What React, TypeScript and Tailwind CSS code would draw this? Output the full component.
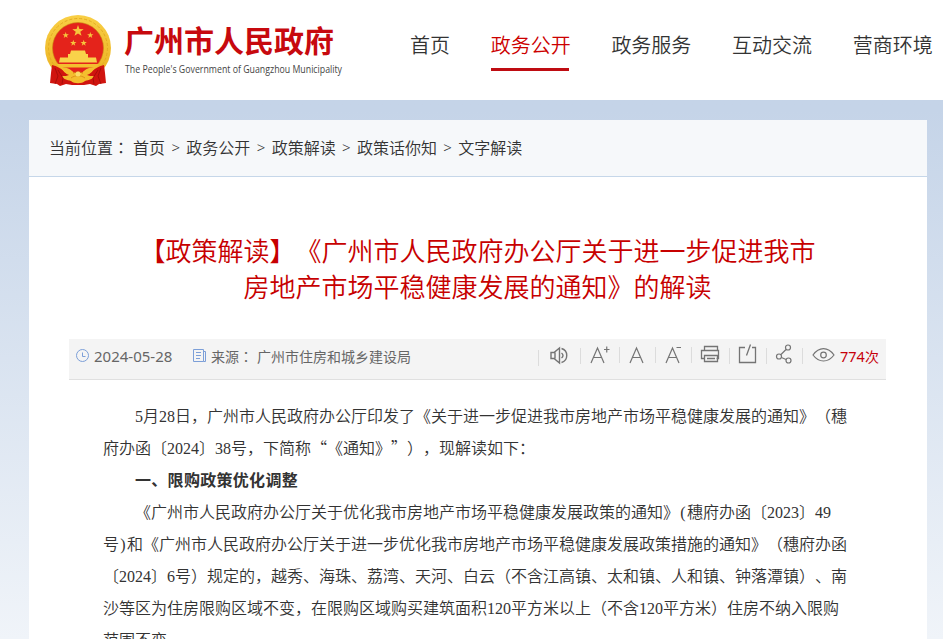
import { Fragment } from 'react'

const NAV_ITEMS = ['首页', '政务公开', '政务服务', '互动交流', '营商环境']
const CRUMBS = ['首页', '政务公开', '政策解读', '政策话你知', '文字解读']

function Star({ x, y, r }: { x: number; y: number; r: number }) {
  const points = Array.from({ length: 10 }, (_, i) => {
    const radius = i % 2 === 0 ? r : r * 0.4
    const a = (Math.PI / 5) * i - Math.PI / 2
    return `${(x + radius * Math.cos(a)).toFixed(2)},${(y + radius * Math.sin(a)).toFixed(2)}`
  }).join(' ')
  return <polygon points={points} fill="#f6c63c" />
}

function Emblem() {
  return (
    <svg width="68" height="72" viewBox="0 0 68 72" className="shrink-0">
      <defs>
        <linearGradient id="gold" x1="0" y1="0" x2="0" y2="1">
          <stop offset="0" stopColor="#f9cf45" />
          <stop offset="1" stopColor="#eab01f" />
        </linearGradient>
      </defs>
      <circle cx="34" cy="34" r="33" fill="url(#gold)" />
      <circle cx="34" cy="34" r="29.5" fill="none" stroke="#e3ab22" strokeWidth="1" strokeDasharray="3 2" />
      <circle cx="34" cy="34" r="25.5" fill="#e4231b" stroke="#c98a12" strokeWidth="0.6" />
      <Star x={34} y={17} r={6} />
      <Star x={21.7} y={21.3} r={3.3} />
      <Star x={46.3} y={21.3} r={3.3} />
      <Star x={29.3} y={29} r={3.3} />
      <Star x={39.7} y={29} r={3.3} />
      <path d="M27 36.500h14l1 3.500h2v3.500h8l1 5H15l1-5h8V40h2z" fill="#f9d24a" />
      <path d="M13 50h42l-2 3.500H15z" fill="#f3c02f" />
      <path d="M8 51c5 1 9 4 14 7h24c5-3 9-6 14-7l1 8 1 10-7 1-3 2-6-2-6 1H28l-6-1-6 2-3-2-7-1 1-10z" fill="#d0140f" />
      <path d="M16 53c6 0 11 2 14 6h8c3-4 8-6 14-6-3 4-6 7-9 8 2 1 4 1 7 1-1 3-5 4-9 5-3 3-11 3-14 0-4-1-8-2-9-5 3 0 5 0 7-1-3-1-6-4-9-8z" fill="#f4be2e" />
      <path d="M29 59.500c2-2 8-2 10 0M27 64c4-3 10-3 14 0" fill="none" stroke="#d98b17" strokeWidth="0.900" />
      <circle cx="34" cy="60" r="2.500" fill="#fbdc66" />
      <path d="M11 54l3 8-3 8M14 56l5 8-1 6M57 54l-3 8 3 8M54 56l-5 8 1 6" fill="none" stroke="#9e0b08" strokeWidth="0.800" />
    </svg>
  )
}

function Header() {
  return (
    <header className="flex h-[100px] shrink-0 bg-white">
      <div className="flex w-[410px] shrink-0 pt-[14px] pl-11">
        <Emblem />
        <div className="ml-3 pt-[7px]">
          <div className="h-9 text-[30px] leading-9 font-bold whitespace-nowrap text-[#c7090e]">广州市人民政府</div>
          <svg width="226" height="22" className="mt-0.5 block overflow-visible">
            <text x="1" y="14" textLength="217" lengthAdjust="spacingAndGlyphs" fontSize="10" fill="#444" fontFamily="'Open Sans', sans-serif">
              The People's Government of Guangzhou Municipality
            </text>
          </svg>
        </div>
      </div>
      <nav className="flex gap-[40.700px] pt-[30px] text-xl leading-[30px] font-[350] text-[#333]">
        {NAV_ITEMS.map((item, i) => (
          <a key={item} className={i === 1 ? 'h-[41px] shrink-0 text-[#cc0000]' : 'h-[41px] shrink-0'}>
            {item}
            {i === 1 && <span className="mt-2 block h-[3px] w-[78px] bg-[#bf0c12]" />}
          </a>
        ))}
      </nav>
    </header>
  )
}

function Toolbar() {
  return (
    <svg width="300" height="40" fill="none" stroke="#747474" strokeWidth="1.200" className="shrink-0">
      <path d="M2.500 11v16M44.500 9v16M83.500 8v16M119.500 8v16M155.500 8v16M193.500 9v16M230.500 9v16M266.500 9v16" stroke="#dcdcdc" strokeWidth="1" />
      <path d="M15 13.500h3l5.500-4.500v15L18 19.500h-3zM19 13.500v6" strokeWidth="1.400" />
      <path d="M25.500 14c2 1.500 2 3.500 0 5M25.500 9.500c7 2 7 12 0 14" strokeWidth="1.400" />
      <path d="M55 24l6.500-15 6.500 15M57.500 18.500h8M68 10.500h5.500M70.750 7.500v6" />
      <path d="M94 24l6.500-15 6.500 15M96.500 18.500h8" />
      <path d="M130 24l6.500-15 6.500 15M132.500 18.500h8M140.500 8.500h4.500" />
      <path d="M168.500 11.500V7.500h13v4M168.500 19.500h-3v-8h17v8h-2M168.500 16.500h13v6h-13zM171 19.500h8" strokeWidth="1.300" />
      <path d="M209 8.500h-5.500v15h16v-15H216M210.500 16.500l4-11" strokeWidth="1.300" />
      <circle cx="252" cy="8.500" r="2.500" />
      <circle cx="243" cy="17.500" r="2.500" />
      <circle cx="252.500" cy="21.500" r="2.500" />
      <path d="M250 10.500l-5 5M245.500 18.500l4.500 2" />
      <path d="M277 16c6-8.500 15-8.500 21 0-6 8-15 8-21 0z" />
      <circle cx="287.500" cy="16" r="2.800" />
    </svg>
  )
}

function MetaBar() {
  return (
    <div className="mt-[35px] mr-[41px] ml-10 flex h-[41px] justify-between border-b border-[#e0e0e0] bg-[#f4f4f4] text-sm leading-[35px] text-[#666]">
      <div className="flex pl-[7px]">
        <svg width="14" height="14" viewBox="0 0 14 14" fill="none" stroke="#7c9fd8" className="mt-[10px]">
          <circle cx="6.500" cy="6.500" r="6" />
          <path d="M6.500 3.500v4h3" />
        </svg>
        <span className="ml-1 w-[99px] font-['Noto_Sans'] text-[15px]">2024-05-28</span>
        <svg width="14" height="14" viewBox="0 0 14 14" fill="none" stroke="#7c9fd8" className="mt-[10px]">
          <path d="M.5.5h10v12H.5zM10.500 2.500h2v10h-2M3 3.500h5M3 6.500h5M3 9.500h4" />
        </svg>
        <span className="ml-1 w-[46px] font-['Noto_Sans_CJK_TC']" lang="zh-TW">
          <span className="font-['Noto_Sans_CJK_SC']">来源</span>：
        </span>
        <span>广州市住房和城乡建设局</span>
      </div>
      <div className="flex">
        <Toolbar />
        <span className="ml-1 w-[46px] whitespace-nowrap text-[#c7000b]">
          <span className="font-['Noto_Sans'] text-[14.500px]">774</span>次
        </span>
      </div>
    </div>
  )
}

// digits and half-width brackets take exactly half an em
function Line({ text, indent }: { text: string; indent?: boolean }) {
  return (
    <p className={indent ? 'flex h-8 items-baseline pl-8 whitespace-nowrap' : 'flex h-8 items-baseline whitespace-nowrap'}>
      {text.split(/([0-9()]+)/).filter(Boolean).map((part, i) =>
        /[0-9()]/.test(part) ? (
          <span key={i} className={/[()]/.test(part) ? "w-2 text-center font-['Liberation_Serif']" : "font-['Liberation_Serif']"}>
            {part}
          </span>
        ) : (
          <span key={i}>{part}</span>
        )
      )}
    </p>
  )
}

function Article() {
  return (
    <article className="mt-[19px] pl-[74px] text-base leading-8 font-[350] text-[#333]">
      <Line indent text="5月28日，广州市人民政府办公厅印发了《关于进一步促进我市房地产市场平稳健康发展的通知》（穗" />
      <Line text="府办函〔2024〕38号，下简称“《通知》”），现解读如下：" />
      <p className="pl-8 font-bold tracking-[0.3px]">一、限购政策优化调整</p>
      <Line indent text="《广州市人民政府办公厅关于优化我市房地产市场平稳健康发展政策的通知》(穗府办函〔2023〕49" />
      <Line text="号)和《广州市人民政府办公厅关于进一步优化我市房地产市场平稳健康发展政策措施的通知》（穗府办函" />
      <Line text="〔2024〕6号）规定的，越秀、海珠、荔湾、天河、白云（不含江高镇、太和镇、人和镇、钟落潭镇）、南" />
      <Line text="沙等区为住房限购区域不变，在限购区域购买建筑面积120平方米以上（不含120平方米）住房不纳入限购" />
      <Line text="范围不变。" />
    </article>
  )
}

export default function App() {
  return (
    <div
      lang="zh-CN"
      className="flex h-[639px] w-[943px] flex-col overflow-hidden bg-linear-to-b from-[#c5d4e8] from-[110px] to-[#f0f4f9] font-['Noto_Sans_CJK_SC',sans-serif] [text-spacing-trim:space-all]"
    >
      <Header />
      <main className="mt-5 mr-4 ml-[29px] h-[519px] shrink-0 bg-white">
        <div className="flex h-[57px] border-b border-[#c6d7e9] bg-[#f6f8fa] pl-5 text-base leading-[55px] font-[350] text-[#333]">
          <span className="w-[84px] font-['Noto_Sans_CJK_TC']" lang="zh-TW">
            <span className="font-['Noto_Sans_CJK_SC']">当前位置</span>：
          </span>
          {CRUMBS.map((crumb, i) => (
            <Fragment key={crumb}>
              {i > 0 && <span className="w-[21.300px] text-center font-['Noto_Sans'] text-[15px]">&gt;</span>}
              <a>{crumb}</a>
            </Fragment>
          ))}
        </div>
        <h1 className="pt-[55px] pr-px text-center text-[26px] leading-9 font-[350] text-[#c70000]">
          【政策解读】《广州市人民政府办公厅关于进一步促进我市
          <br />
          房地产市场平稳健康发展的通知》的解读
        </h1>
        <MetaBar />
        <Article />
      </main>
    </div>
  )
}
